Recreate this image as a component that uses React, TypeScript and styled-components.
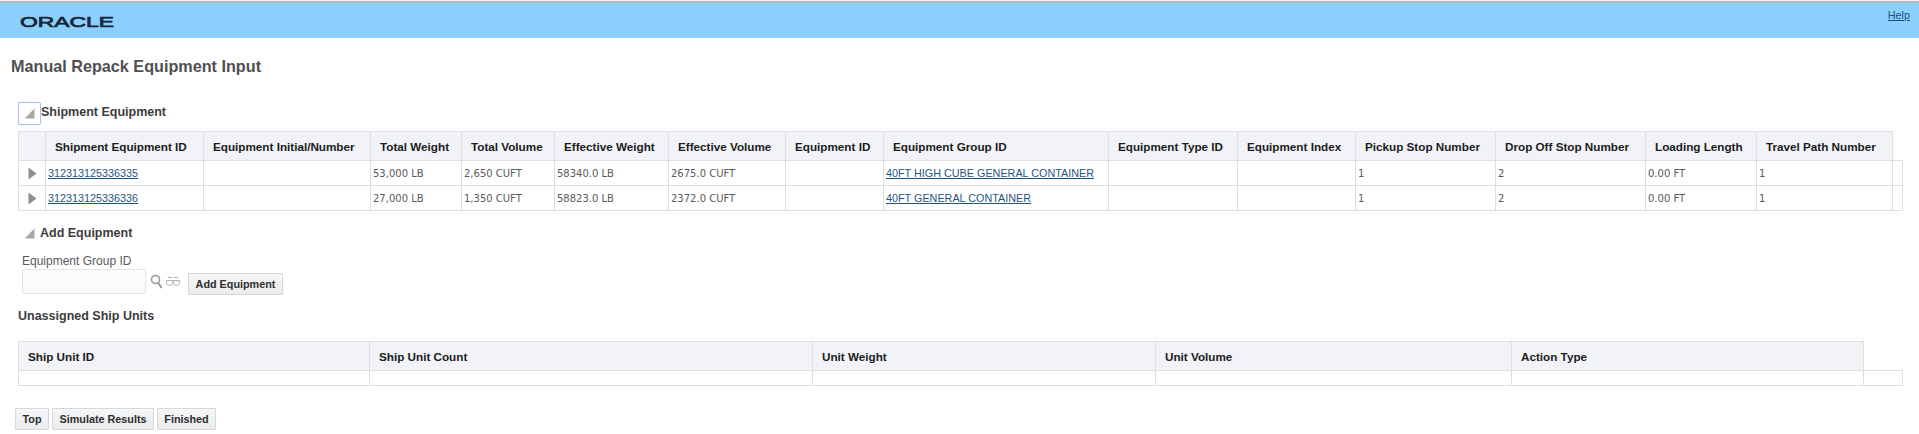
import styled, { createGlobalStyle } from "styled-components";

const GlobalStyle = createGlobalStyle`
  html, body {
    margin: 0;
    background: #fff;
    font-family: "Liberation Sans", Arial, sans-serif;
  }
`;

const equipmentCols = [27, 158, 167, 91, 93, 114, 117, 98, 225, 129, 118, 140, 150, 111, 136, 10];
const equipmentHeads = [
  "",
  "Shipment Equipment ID",
  "Equipment Initial/Number",
  "Total Weight",
  "Total Volume",
  "Effective Weight",
  "Effective Volume",
  "Equipment ID",
  "Equipment Group ID",
  "Equipment Type ID",
  "Equipment Index",
  "Pickup Stop Number",
  "Drop Off Stop Number",
  "Loading Length",
  "Travel Path Number",
];
const equipmentRows = [
  { id: "312313125336335", weight: "53,000 LB", volume: "2,650 CUFT", effWeight: "58340.0 LB", effVolume: "2675.0 CUFT", group: "40FT HIGH CUBE GENERAL CONTAINER" },
  { id: "312313125336336", weight: "27,000 LB", volume: "1,350 CUFT", effWeight: "58823.0 LB", effVolume: "2372.0 CUFT", group: "40FT GENERAL CONTAINER" },
];

const shipUnitCols = [351, 443, 343, 356, 352, 39];
const shipUnitHeads = ["Ship Unit ID", "Ship Unit Count", "Unit Weight", "Unit Volume", "Action Type"];

const TopLine = styled.div`
  height: 3px;
  background: linear-gradient(#f0f1f2 33%, #b6b9bd 33%);
`;

const Banner = styled.header`
  height: 35px;
  background: #8bd0fd;
  display: flex;
  justify-content: space-between;
  padding: 0 9px 0 20px;
`;

const Logo = styled.svg`
  width: 96px;
  height: 14px;
  margin-top: 11px;
`;

const HelpLink = styled.a`
  font-size: 10.8px;
  color: #1f4e79;
  text-decoration: underline;
  margin-top: 6px;
`;

const PageTitle = styled.h1`
  margin: 19px 0 0 11px;
  height: 19px;
  font-size: 16.2px;
  line-height: 19px;
  font-weight: bold;
  color: #4f4f4f;
`;

const SectionRow = styled.div<{ $top: number; $left: number }>`
  display: flex;
  align-items: center;
  margin: ${(p) => p.$top}px 0 0 ${(p) => p.$left}px;
`;

const FocusBox = styled.div`
  box-sizing: border-box;
  width: 23px;
  height: 23px;
  border: 1px solid #a9c0e8;
  border-radius: 2px;
  box-shadow: 0 0 1px #a9c0e8;
  display: flex;
  align-items: center;
  justify-content: center;
`;

const SectionTitle = styled.h2`
  margin: 0;
  font-size: 12.5px;
  line-height: 16px;
  font-weight: bold;
  color: #3c3c3c;
`;

const ShipmentTitle = styled(SectionTitle)`
  position: relative;
  top: -2px;
`;

const AddTitle = styled(SectionTitle)`
  margin-left: 5px;
`;

const Grid = styled.table<{ $top: number }>`
  border-collapse: collapse;
  table-layout: fixed;
  width: 1884px;
  margin: ${(p) => p.$top}px 0 0 18px;
`;

const HeadCell = styled.th`
  height: 28px;
  padding: 0 0 0 9px;
  background: #f1f3f7;
  border: 1px solid #dcdfe3;
  font-size: 11.7px;
  font-weight: bold;
  color: #1c1c1c;
  text-align: left;
  white-space: nowrap;
`;

const BlankHead = styled.th`
  border: 0;
  background: #fff;
  padding: 0;
`;

const Cell = styled.td<{ $height: number }>`
  height: ${(p) => p.$height}px;
  padding: 0 0 0 2px;
  border: 1px solid #dcdfe3;
  font-family: "DejaVu Sans", Verdana, sans-serif;
  font-size: 10px;
  color: #5a5a5a;
  white-space: nowrap;
  overflow: hidden;
`;

const ExpandCell = styled(Cell)`
  padding: 0;
  text-align: center;
`;

const RowLink = styled.a`
  font-family: "Liberation Sans", Arial, sans-serif;
  font-size: 10.8px;
  color: #1f5583;
  text-decoration: underline;
`;

const AddLabel = styled.div`
  margin: 13px 0 0 22px;
  height: 14px;
  font-size: 12px;
  line-height: 14px;
  color: #5a5a5a;
`;

const AddRow = styled.div`
  display: flex;
  align-items: flex-start;
  margin: 1px 0 0 22px;
`;

const TextInput = styled.input`
  box-sizing: border-box;
  width: 124px;
  height: 25px;
  padding: 0;
  border: 1px solid #dfe2e6;
  border-radius: 2px;
  background: #fbfcfd;
`;

const IconWrap = styled.svg<{ $left: number }>`
  margin: 5px 0 0 ${(p) => p.$left}px;
`;

const Button = styled.button`
  box-sizing: border-box;
  height: 22px;
  padding: 0;
  border: 1px solid #d4d7db;
  border-radius: 1px;
  background: linear-gradient(#f6f7f8, #e9ebed);
  font-family: "Liberation Sans", Arial, sans-serif;
  font-size: 10.8px;
  font-weight: bold;
  color: #2e2e2e;
`;

const AddButton = styled(Button)`
  width: 95px;
  margin: 4px 0 0 8px;
`;

const PlainHeading = styled(SectionTitle)`
  margin: 13px 0 0 18px;
`;

const ActionBar = styled.div`
  display: flex;
  gap: 3px;
  margin: 22px 0 0 15px;
`;

const ActionButton = styled(Button)<{ $width: number }>`
  width: ${(p) => p.$width}px;
`;

const CollapseIcon = () => (
  <svg width="11" height="11" viewBox="0 0 11 11">
    <path d="M10.5 0.5V10.5H0.5Z" fill="#a8a8a8" />
  </svg>
);

const ExpandIcon = () => (
  <svg width="9" height="13" viewBox="0 0 9 13" style={{ verticalAlign: "middle" }}>
    <path d="M0.5 0.5L8.5 6.5L0.5 12.5Z" fill="#8e8e8e" />
  </svg>
);

const App = () => {
  return (
    <>
      <GlobalStyle />
      <TopLine />
      <Banner>
        <Logo viewBox="0 0 96 14">
          <text
            x="0"
            y="12.5"
            textLength="94"
            lengthAdjust="spacingAndGlyphs"
            fontFamily="'Liberation Sans', Arial, sans-serif"
            fontSize="15.5"
            stroke="#16263a"
            strokeWidth="0.7"
            fill="#16263a"
          >
            ORACLE
          </text>
        </Logo>
        <HelpLink>Help</HelpLink>
      </Banner>

      <PageTitle>Manual Repack Equipment Input</PageTitle>

      <SectionRow $top={26} $left={18}>
        <FocusBox>
          <CollapseIcon />
        </FocusBox>
        <ShipmentTitle>Shipment Equipment</ShipmentTitle>
      </SectionRow>

      <Grid $top={6}>
        <colgroup>
          {equipmentCols.map((w, i) => (
            <col key={i} width={w} />
          ))}
        </colgroup>
        <thead>
          <tr>
            {equipmentHeads.map((head, i) => (
              <HeadCell key={i}>{head}</HeadCell>
            ))}
            <BlankHead />
          </tr>
        </thead>
        <tbody>
          {equipmentRows.map((row) => (
            <tr key={row.id}>
              <ExpandCell $height={24}>
                <ExpandIcon />
              </ExpandCell>
              <Cell $height={24}>
                <RowLink>{row.id}</RowLink>
              </Cell>
              <Cell $height={24} />
              <Cell $height={24}>{row.weight}</Cell>
              <Cell $height={24}>{row.volume}</Cell>
              <Cell $height={24}>{row.effWeight}</Cell>
              <Cell $height={24}>{row.effVolume}</Cell>
              <Cell $height={24} />
              <Cell $height={24}>
                <RowLink>{row.group}</RowLink>
              </Cell>
              <Cell $height={24} />
              <Cell $height={24} />
              <Cell $height={24}>1</Cell>
              <Cell $height={24}>2</Cell>
              <Cell $height={24}>0.00 FT</Cell>
              <Cell $height={24}>1</Cell>
              <Cell $height={24} />
            </tr>
          ))}
        </tbody>
      </Grid>

      <SectionRow $top={14} $left={24}>
        <CollapseIcon />
        <AddTitle>Add Equipment</AddTitle>
      </SectionRow>

      <AddLabel>Equipment Group ID</AddLabel>
      <AddRow>
        <TextInput />
        <IconWrap $left={4} width="14" height="15" viewBox="0 0 14 15" fill="none">
          <circle cx="5.5" cy="5.5" r="4" stroke="#9a9a9a" strokeWidth="1.6" />
          <path d="M8.5 9L11.5 14" stroke="#9a9a9a" strokeWidth="2" />
        </IconWrap>
        <IconWrap $left={2} width="14" height="15" viewBox="0 0 14 15" fill="none">
          <path
            d="M0.5 8.5a3 3 0 0 0 6 0V6.5H0.5ZM7.5 6.5V8.5a3 3 0 0 0 6 0V6.5ZM6.5 7.5H7.5M2 3.5H6M8 3.5H12"
            stroke="#b0b0b0"
            strokeWidth="1"
          />
        </IconWrap>
        <AddButton>Add Equipment</AddButton>
      </AddRow>

      <PlainHeading>Unassigned Ship Units</PlainHeading>

      <Grid $top={17}>
        <colgroup>
          {shipUnitCols.map((w, i) => (
            <col key={i} width={w} />
          ))}
        </colgroup>
        <thead>
          <tr>
            {shipUnitHeads.map((head) => (
              <HeadCell key={head}>{head}</HeadCell>
            ))}
            <BlankHead />
          </tr>
        </thead>
        <tbody>
          <tr>
            {shipUnitCols.map((_, i) => (
              <Cell key={i} $height={14} />
            ))}
          </tr>
        </tbody>
      </Grid>

      <ActionBar>
        <ActionButton $width={34}>Top</ActionButton>
        <ActionButton $width={102}>Simulate Results</ActionButton>
        <ActionButton $width={59}>Finished</ActionButton>
      </ActionBar>
    </>
  );
};

export default App;
